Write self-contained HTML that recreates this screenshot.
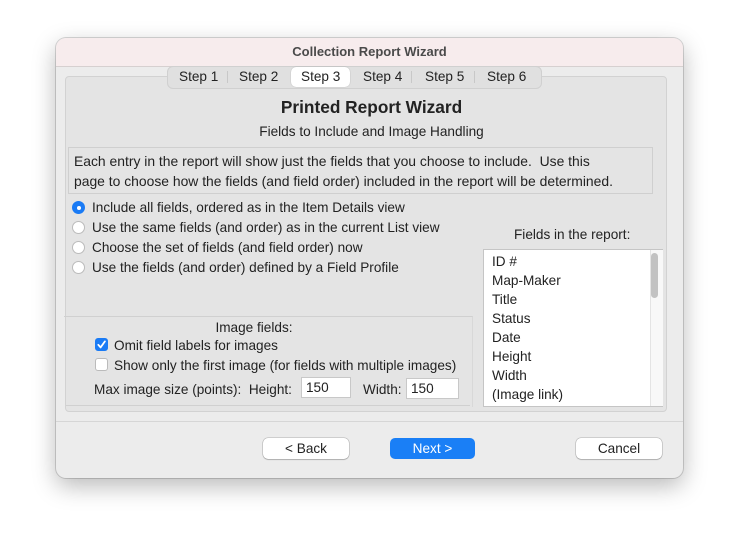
<!DOCTYPE html>
<html><head><style>
body{margin:0;width:739px;height:553px;background:#fff;font-family:"Liberation Sans",sans-serif;font-size:13.6px;color:#222;position:relative;overflow:hidden}
.a{position:absolute;white-space:nowrap}
#win{position:absolute;left:56px;top:38px;width:627px;height:440px;border-radius:10px;background:#ececec;box-shadow:0 8px 24px rgba(0,0,0,.28),0 0 0 1px rgba(0,0,0,.15);overflow:hidden}
#title{position:absolute;left:0;top:0;width:627px;height:28px;background:#f7eced;border-bottom:1px solid #d6d0d0;text-align:center;line-height:27px;font-weight:bold;color:#4a4a4a;font-size:13px}
.radio{position:absolute;width:13px;height:13px;border-radius:50%;background:#fff;border:1px solid #bbb;box-sizing:border-box}
.radio.on{background:#1a7bf5;border-color:#1a7bf5}
.radio.on:after{content:"";position:absolute;left:3.5px;top:3.5px;width:4px;height:4px;border-radius:50%;background:#fff}
.cb{position:absolute;width:13px;height:13px;border-radius:3px;background:#fff;border:1px solid #bbb;box-sizing:border-box}
.btn{position:absolute;height:21px;border-radius:5px;background:#fff;box-shadow:0 0 0 .5px rgba(0,0,0,.25),0 1px 1px rgba(0,0,0,.15);text-align:center;line-height:21px;font-size:13.6px}
.inp{position:absolute;height:21px;background:#fff;border:1px solid #c8c8c8;box-sizing:border-box;line-height:20px;padding-left:4px;font-size:13.6px}
</style></head><body>
<div id="win">
<div id="title">Collection Report Wizard</div>
<div class="a" style="left:9px;top:38px;width:600px;height:334px;background:#e4e4e4;border:1px solid #d2d2d2;border-radius:4px"></div>
<div class="a" style="left:111px;top:28px;width:373px;height:21px;background:#e0e0e0;border:1px solid #d0d0d0;border-radius:6px"></div>
<div class="a" style="left:235px;top:29px;width:59px;height:20px;background:#fff;border-radius:5px;box-shadow:0 0 1px rgba(0,0,0,.3)"></div>
<div class="a" style="left:123px;top:31px">Step 1</div>
<div class="a" style="left:171px;top:33px;width:1px;height:12px;background:#c8c8c8"></div>
<div class="a" style="left:183px;top:31px">Step 2</div>
<div class="a" style="left:245px;top:31px">Step 3</div>
<div class="a" style="left:307px;top:31px">Step 4</div>
<div class="a" style="left:355px;top:33px;width:1px;height:12px;background:#c8c8c8"></div>
<div class="a" style="left:369px;top:31px">Step 5</div>
<div class="a" style="left:418px;top:33px;width:1px;height:12px;background:#c8c8c8"></div>
<div class="a" style="left:431px;top:31px">Step 6</div>
<div class="a" style="left:0;width:631px;top:59px;text-align:center;font-weight:bold;font-size:17.3px">Printed Report Wizard</div>
<div class="a" style="left:0;width:631px;top:86px;text-align:center">Fields to Include and Image Handling</div>
<div class="a" style="left:12px;top:109px;width:585px;height:47px;border:1px solid #cfcfcf;box-sizing:border-box"></div>
<div class="a" style="left:18px;top:113px;line-height:20px;font-size:13.9px">Each entry in the report will show just the fields that you choose to include.&nbsp; Use this<br>page to choose how the fields (and field order) included in the report will be determined.</div>
<div class="radio on" style="left:16px;top:163px"></div><div class="a" style="left:36px;top:162px">Include all fields, ordered as in the Item Details view</div>
<div class="radio" style="left:16px;top:183px"></div><div class="a" style="left:36px;top:182px">Use the same fields (and order) as in the current List view</div>
<div class="radio" style="left:16px;top:203px"></div><div class="a" style="left:36px;top:202px">Choose the set of fields (and field order) now</div>
<div class="radio" style="left:16px;top:223px"></div><div class="a" style="left:36px;top:222px">Use the fields (and order) defined by a Field Profile</div>
<div class="a" style="left:458px;top:189px">Fields in the report:</div>
<div class="a" style="left:427px;top:211px;width:180px;height:158px;background:#fff;border:1px solid #c5c5c5;box-sizing:border-box"></div>
<div class="a" style="left:594px;top:212px;width:12px;height:156px;background:#f8f8f8;border-left:1px solid #e4e4e4"></div>
<div class="a" style="left:595px;top:215px;width:7px;height:45px;border-radius:4px;background:#c2c2c2"></div>
<div class="a" style="left:436px;top:214px;line-height:19px">ID #<br>Map-Maker<br>Title<br>Status<br>Date<br>Height<br>Width<br>(Image link)</div>
<div class="a" style="left:8px;top:278px;width:408px;height:90px;border-top:1px solid #d0d0d0;border-right:1px solid #d8d8d8"></div>
<div class="a" style="left:10px;top:367px;width:404px;height:1px;background:#d0d0d0"></div>
<div class="a" style="left:0;width:396px;top:282px;text-align:center">Image fields:</div>
<div class="cb" style="left:39px;top:300px;background:#1a7bf5;border-color:#1a7bf5"><svg width="13" height="13" style="position:absolute;left:-1px;top:-1px"><path d="M3.3 6.8l2.3 2.6 4.3-6" stroke="#fff" stroke-width="1.8" fill="none" stroke-linecap="round" stroke-linejoin="round"/></svg></div>
<div class="a" style="left:58px;top:300px">Omit field labels for images</div>
<div class="cb" style="left:39px;top:320px"></div>
<div class="a" style="left:58px;top:320px">Show only the first image (for fields with multiple images)</div>
<div class="a" style="left:38px;top:344px">Max image size (points):&nbsp; Height:</div>
<div class="inp" style="left:245px;top:339px;width:50px">150</div>
<div class="a" style="left:307px;top:344px">Width:</div>
<div class="inp" style="left:350px;top:340px;width:53px">150</div>
<div class="a" style="left:0;top:383px;width:627px;height:1px;background:#d6d6d6"></div>
<div class="btn" style="left:207px;top:400px;width:86px">&lt; Back</div>
<div class="btn" style="left:334px;top:400px;width:85px;background:#1a7ff6;color:#fff;box-shadow:none">Next &gt;</div>
<div class="btn" style="left:520px;top:400px;width:86px">Cancel</div>
</div>
</body></html>
